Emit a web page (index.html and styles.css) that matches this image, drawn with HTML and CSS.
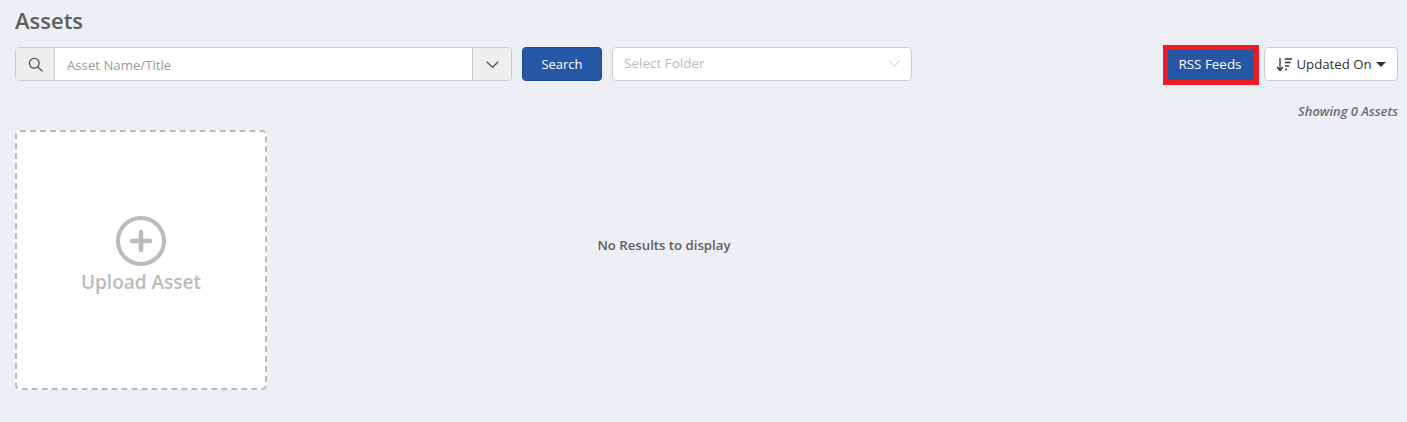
FILE: index.html
```html
<!DOCTYPE html>
<html lang="en">
<head>
  <meta charset="UTF-8" />
  <meta name="viewport" content="width=device-width, initial-scale=1.0" />
  <title>Assets</title>
  <link rel="stylesheet" href="styles.css">
</head>
<body>
  <div class="page">
    <h1>Assets</h1>
    <div class="toolbar">
      <div class="search-group">
        <div class="addon addon-left">
          <svg width="15" height="15" viewBox="0 0 16 16" fill="none" stroke="#555" stroke-width="1.4">
            <circle cx="6.7" cy="6.7" r="5.2" />
            <path d="M10.5 10.5 15 15" stroke-linecap="round" />
          </svg>
        </div>
        <input class="search-input" type="text" placeholder="Asset Name/Title" />
        <div class="addon addon-right">
          <svg width="13" height="7" viewBox="0 0 13 7" fill="none" stroke="#555" stroke-width="1.3">
            <path d="M.7.7l5.8 5.6L12.3.7" />
          </svg>
        </div>
      </div>
      <button class="btn btn-primary search-btn">Search</button>
      <div class="folder-select">
        <span>Select Folder</span>
        <svg width="11" height="7" viewBox="0 0 11 7" fill="none" stroke="#c8c8c8" stroke-width="1">
          <path d="M.5.5l5 6 5-6" />
        </svg>
      </div>
      <div class="toolbar-right">
        <button class="btn btn-primary rss-btn">RSS Feeds</button>
        <button class="btn sort-btn">
          <svg width="17" height="15" viewBox="0 0 17 15" fill="none" stroke="#333" stroke-width="1.3">
            <path d="M4 1v12M1 10l3 3.5L7 10" />
            <path d="M9 2h7M9 5.5h5.5M9 9h4M9 12.5h2" />
          </svg>
          <span>Updated On</span>
          <span class="caret"></span>
        </button>
      </div>
    </div>
    <div class="count">Showing 0 Assets</div>
    <div class="content">
      <div class="upload-card">
        <svg width="52" height="52" viewBox="0 0 52 52" fill="none" stroke="#bbb">
          <circle cx="26" cy="26" r="23" stroke-width="4" />
          <path d="M26 17v18M17 26h18" stroke-width="4.5" stroke-linecap="round" />
        </svg>
        <div class="upload-label">Upload Asset</div>
      </div>
      <div class="empty">No Results to display</div>
    </div>
  </div>
</body>
</html>
```

FILE: styles.css
```css
* {
  box-sizing: border-box;
}
html, body {
  height: 100%;
}
body {
  margin: 0;
  background: #eceff4;
  font-family: "Open Sans", "Noto Sans", sans-serif;
  color: #333;
}
.page {
  padding: 6px 9px 0 15px;
}
h1 {
  margin: 0 0 13px;
  font-size: 22px;
  line-height: 28px;
  font-weight: 600;
  color: #5f5f5f;
}
.toolbar {
  display: flex;
  align-items: center;
  height: 34px;
}
.search-group {
  display: flex;
  width: 497px;
  height: 34px;
  border: 1px solid #ccc;
  border-radius: 4px;
  overflow: hidden;
  background: #fff;
}
.addon {
  display: flex;
  align-items: center;
  justify-content: center;
  background: #eee;
  flex: none;
}
.addon-left {
  width: 39px;
  border-right: 1px solid #ccc;
}
.addon-right {
  width: 39px;
  border-left: 1px solid #ccc;
}
.search-input {
  flex: 1;
  min-width: 0;
  border: none;
  outline: none;
  padding: 2px 12px 0;
  font-family: inherit;
  font-size: 13.2px;
  background: #fff;
}
.search-input::placeholder {
  color: #999;
  opacity: 1;
}
.btn {
  height: 34px;
  border: 1px solid #ccc;
  border-radius: 4px;
  background: #fff;
  font-family: inherit;
  font-size: 13px;
  color: #333;
  padding: 0;
}
.btn-primary {
  background: #2557a4;
  border-color: #1f4c91;
  color: #fff;
}
.search-btn {
  width: 80px;
  margin-left: 10px;
}
.folder-select {
  display: flex;
  align-items: center;
  justify-content: space-between;
  width: 300px;
  height: 34px;
  margin-left: 10px;
  padding: 0 11px 2px 11px;
  background: #fff;
  border: 1px solid #ccc;
  border-radius: 4px;
  font-size: 13.5px;
  color: #bbb;
}
.toolbar-right {
  display: flex;
  align-items: center;
  margin-left: auto;
}
.rss-btn {
  width: 96px;
  height: 40px;
  margin-top: 2px;
  padding: 0 2px 2px 0;
  border: 5px solid #ed1c24;
  border-radius: 0;
  font-size: 13.4px;
}
.sort-btn {
  display: flex;
  align-items: center;
  justify-content: center;
  gap: 3px;
  width: 134px;
  margin-left: 5px;
  font-size: 13.2px;
}
.caret {
  width: 0;
  height: 0;
  margin-left: 1px;
  border: 5px solid transparent;
  border-top: 5px solid #333;
  border-bottom: 0;
}
.count {
  margin-top: 22px;
  text-align: right;
  font-size: 12.9px;
  line-height: 16px;
  font-weight: 600;
  font-style: italic;
  color: #6b6b6b;
}
.content {
  display: flex;
  margin-top: 11px;
}
.upload-card {
  display: flex;
  flex-direction: column;
  align-items: center;
  width: 252px;
  height: 260px;
  padding-top: 83px;
  background: #fff;
  border: 2px dashed #bbb;
  border-radius: 5px;
}
.upload-label {
  margin-top: 2px;
  font-size: 19px;
  line-height: 26px;
  font-weight: 600;
  color: #bbb;
}
.empty {
  width: 794px;
  padding-top: 106px;
  text-align: center;
  font-size: 13.2px;
  line-height: 18px;
  font-weight: 600;
  color: #5f5f5f;
}
```
